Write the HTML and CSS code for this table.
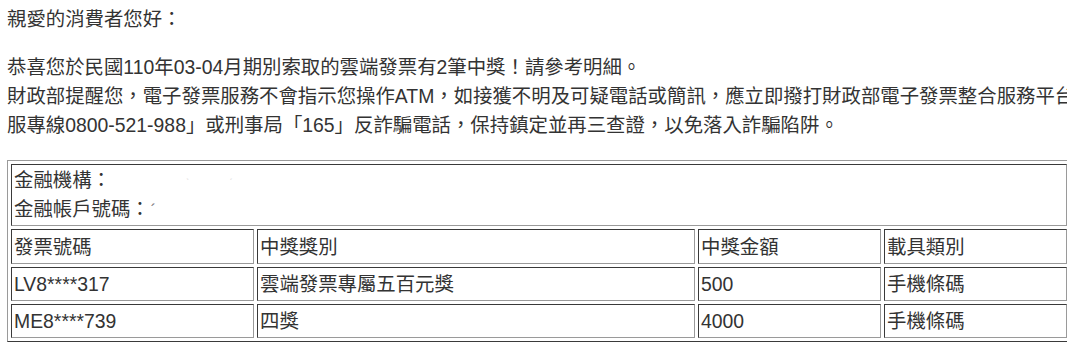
FILE: index.html
```html
<!DOCTYPE html>
<html lang="zh-Hant">
<head>
<meta charset="utf-8">
<title>雲端發票中獎通知</title>
<link rel="stylesheet" href="styles.css">
</head>
<body>
<div class="mail">
  <p class="greet">親愛的消費者您好：</p>
  <p class="notice">恭喜您於民國110年03-04月期別索取的雲端發票有2筆中獎！請參考明細。<br>財政部提醒您，電子發票服務不會指示您操作ATM，如接獲不明及可疑電話或簡訊，應立即撥打財政部電子發票整合服務平台客服專線0800-521-988」或刑事局「165」反詐騙電話，保持鎮定並再三查證，以免落入詐騙陷阱。</p>
  <table class="prize">
    <colgroup>
      <col class="c1"><col class="c2"><col class="c3"><col class="c4">
    </colgroup>
    <tr class="bank-row">
      <td colspan="4" class="bank">金融機構：<span class="speck s1">ˋ</span><span class="speck s2">ˊ</span><br>金融帳戶號碼：<span class="tick">´</span></td>
    </tr>
    <tr class="head-row">
      <td>發票號碼</td><td>中獎獎別</td><td>中獎金額</td><td>載具類別</td>
    </tr>
    <tr class="row">
      <td>LV8****317</td><td>雲端發票專屬五百元獎</td><td>500</td><td>手機條碼</td>
    </tr>
    <tr class="row">
      <td>ME8****739</td><td>四獎</td><td>4000</td><td>手機條碼</td>
    </tr>
  </table>
</div>
</body>
</html>
```
FILE: styles.css
```css
html {
  overflow: hidden;
}
body {
  margin: 0;
  background: #ffffff;
  color: #333333;
  font-family: "Liberation Sans", Arial, "Noto Sans CJK TC", sans-serif;
  font-size: 19.4px;
  line-height: 28.8px;
}
.mail {
  width: 1090px;
  padding: 5px 0 0 7px;
}
.greet {
  margin: 0 0 19.2px 0;
}
.notice {
  margin: 0 0 21px 0;
}
.prize {
  width: 1064px;
  table-layout: fixed;
  border-collapse: separate;
  border-spacing: 3px;
  border-style: solid;
  border-width: 1px;
  border-color: #9a9a9a #3a3a3a #3a3a3a #9a9a9a;
}
.c1 { width: 243px; }
.c2 { width: 438px; }
.c3 { width: 183px; }
.c4 { width: 183px; }
.prize td {
  border-style: solid;
  border-width: 1px;
  border-color: #3a3a3a #9a9a9a #9a9a9a #3a3a3a;
  padding: 0 2px;
  vertical-align: middle;
  white-space: nowrap;
  line-height: 24px;
}
.bank-row {
  height: 62px;
}
.prize .bank {
  line-height: 29px;
}
.head-row {
  height: 35px;
}
.row {
  height: 34px;
}
.speck {
  color: #dddddd;
  font-size: 10px;
  line-height: 1;
}
.s1 { margin-left: 75px; }
.s2 { margin-left: 40px; }
.tick {
  color: #777777;
  font-size: 16px;
  line-height: 1;
  margin-left: 1px;
}
```
